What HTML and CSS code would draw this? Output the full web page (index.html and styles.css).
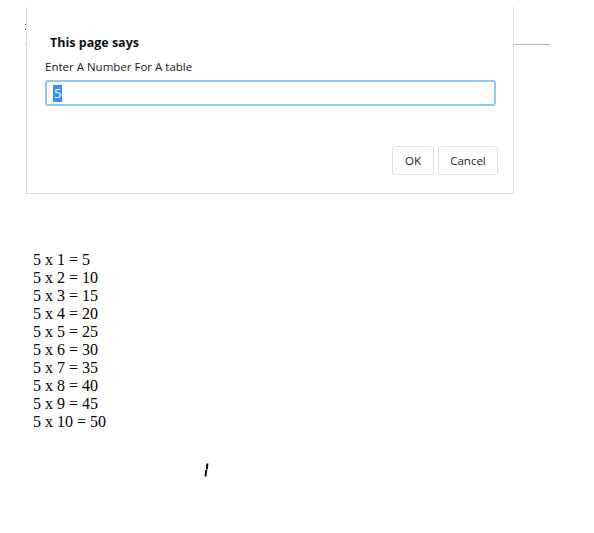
FILE: index.html
```html
<!DOCTYPE html>
<html>
<head>
<meta charset="utf-8">
<link rel="stylesheet" href="styles.css">
</head>
<body>
<div class="page">
  <div class="top">
    <span class="dots"></span>
    <div class="rule"></div>
  </div>
  <div class="table">
    <div>5 x 1 = 5</div>
    <div>5 x 2 = 10</div>
    <div>5 x 3 = 15</div>
    <div>5 x 4 = 20</div>
    <div>5 x 5 = 25</div>
    <div>5 x 6 = 30</div>
    <div>5 x 7 = 35</div>
    <div>5 x 8 = 40</div>
    <div>5 x 9 = 45</div>
    <div>5 x 10 = 50</div>
  </div>
</div>

<div class="dialog">
  <div class="title">This page says</div>
  <div class="label">Enter A Number For A table</div>
  <div class="input"><span class="sel">5</span></div>
  <div class="actions">
    <button class="btn ok">OK</button>
    <button class="btn cancel">Cancel</button>
  </div>
</div>

<svg class="cursor" width="6" height="15" viewBox="0 0 6 15">
  <path d="M4.4 0.5 L3.8 6.5 M3.2 7 L2.5 13.5" stroke="#000" stroke-width="2" fill="none"/>
</svg>
</body>
</html>
```

FILE: styles.css
```css
html, body {
  margin: 0;
  padding: 0;
  background: #fff;
}
.page {
  padding-left: 25px;
}
.top {
  position: relative;
  height: 45px;
}
.dots {
  position: absolute;
  left: 0;
  top: 24px;
  width: 1px;
  height: 6px;
  border-top: 1px solid #333;
  border-bottom: 1px solid #333;
  box-sizing: border-box;
}
.rule {
  position: absolute;
  left: 0;
  top: 44px;
  width: 525px;
  height: 1px;
  background: #a7b9c9;
}
.table {
  margin-top: 206px;
  padding-left: 8px;
  font-family: "Liberation Serif", serif;
  font-size: 16px;
  line-height: 18px;
  color: #000;
}
.dialog {
  position: absolute;
  left: 26px;
  top: 7px;
  width: 486px;
  height: 186px;
  border: 1px solid #d6dee7;
  border-top: none;
  background: #fff;
  font-family: "Open Sans", sans-serif;
  color: #202020;
  box-sizing: content-box;
}
.title {
  margin: 27px 0 0 23px;
  font-size: 12.5px;
  font-weight: 700;
  line-height: 17px;
  color: #111;
}
.label {
  margin: 8px 0 0 18px;
  font-size: 11.5px;
  line-height: 16px;
}
.input {
  margin: 5px 0 0 18px;
  height: 22px;
  border: 2px solid #8fcbf7;
  border-radius: 3px;
  display: flex;
  align-items: center;
  padding-left: 6px;
  font-size: 13px;
  box-sizing: content-box;
  width: 441px;
}
.sel {
  background: #3391ff;
  color: #fff;
  line-height: 17px;
  padding: 0 1px;
}
.actions {
  display: flex;
  justify-content: flex-end;
  gap: 4px;
  margin: 40px 15px 0 0;
}
.btn {
  height: 29px;
  border: 1px solid #dfe3e8;
  border-radius: 3px;
  background: #fff;
  font-family: "Open Sans", sans-serif;
  font-size: 11.5px;
  color: #202020;
  padding: 0;
}
.ok { width: 42px; }
.cancel { width: 60px; }
.cursor {
  position: absolute;
  left: 203px;
  top: 463px;
}
```
